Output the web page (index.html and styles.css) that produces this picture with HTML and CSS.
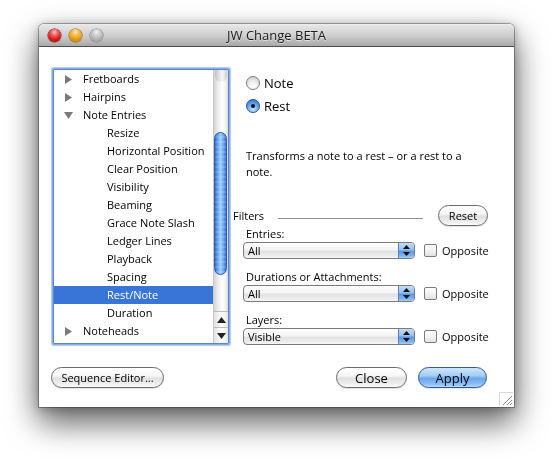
FILE: index.html
```html
<!DOCTYPE html>
<html>
<head>
<meta charset="utf-8">
<link rel="stylesheet" href="styles.css">
</head>
<body>
<div class="window">
  <div class="titlebar">
    <div class="lights">
      <span class="light red"></span>
      <span class="light orange"></span>
      <span class="light gray"></span>
    </div>
    <div class="title">JW Change BETA</div>
  </div>
  <div class="content">
    <div class="main">
      <div class="listbox">
        <div class="rows">
          <div class="row top"><svg class="tri" width="9" height="9" viewBox="0 0 9 9"><path d="M1 0 L8 4.5 L1 9 Z" fill="#7a7a7a"/></svg><span>Fretboards</span></div>
          <div class="row top"><svg class="tri" width="9" height="9" viewBox="0 0 9 9"><path d="M1 0 L8 4.5 L1 9 Z" fill="#7a7a7a"/></svg><span>Hairpins</span></div>
          <div class="row top"><svg class="tri" width="9" height="9" viewBox="0 0 9 9"><path d="M0 1 L9 1 L4.5 8 Z" fill="#7a7a7a"/></svg><span>Note Entries</span></div>
          <div class="row child">Resize</div>
          <div class="row child">Horizontal Position</div>
          <div class="row child">Clear Position</div>
          <div class="row child">Visibility</div>
          <div class="row child">Beaming</div>
          <div class="row child">Grace Note Slash</div>
          <div class="row child">Ledger Lines</div>
          <div class="row child">Playback</div>
          <div class="row child">Spacing</div>
          <div class="row child selected">Rest/Note</div>
          <div class="row child">Duration</div>
          <div class="row top"><svg class="tri" width="9" height="9" viewBox="0 0 9 9"><path d="M1 0 L8 4.5 L1 9 Z" fill="#7a7a7a"/></svg><span>Noteheads</span></div>
        </div>
        <div class="scrollbar">
          <div class="track">
            <div class="cap"></div>
            <div class="knob"></div>
          </div>
          <div class="arrow up"><svg width="9" height="6" viewBox="0 0 9 6"><path d="M4.5 0 L9 6 L0 6 Z" fill="#222"/></svg></div>
          <div class="arrow down"><svg width="9" height="6" viewBox="0 0 9 6"><path d="M0 0 L9 0 L4.5 6 Z" fill="#222"/></svg></div>
        </div>
      </div>
      <div class="panel">
        <div class="radios">
          <label class="radio-row"><span class="radio"></span><span>Note</span></label>
          <label class="radio-row"><span class="radio on"><span class="dot"></span></span><span>Rest</span></label>
        </div>
        <p class="desc">Transforms a note to a rest – or a rest to a note.</p>
        <div class="filters">
          <span class="filters-label">Filters</span>
          <span class="rule"></span>
          <span class="btn reset">Reset</span>
        </div>
        <div class="group">
          <div class="glabel">Entries:</div>
          <div class="grow">
            <div class="popup"><span class="ptext">All</span><span class="parrows"><svg width="7" height="11" viewBox="0 0 7 11"><path d="M3.5 0 L7 4 L0 4 Z M0 7 L7 7 L3.5 11 Z" fill="#111"/></svg></span></div>
            <span class="check"></span><span class="opp">Opposite</span>
          </div>
        </div>
        <div class="group">
          <div class="glabel">Durations or Attachments:</div>
          <div class="grow">
            <div class="popup"><span class="ptext">All</span><span class="parrows"><svg width="7" height="11" viewBox="0 0 7 11"><path d="M3.5 0 L7 4 L0 4 Z M0 7 L7 7 L3.5 11 Z" fill="#111"/></svg></span></div>
            <span class="check"></span><span class="opp">Opposite</span>
          </div>
        </div>
        <div class="group">
          <div class="glabel">Layers:</div>
          <div class="grow">
            <div class="popup"><span class="ptext">Visible</span><span class="parrows"><svg width="7" height="11" viewBox="0 0 7 11"><path d="M3.5 0 L7 4 L0 4 Z M0 7 L7 7 L3.5 11 Z" fill="#111"/></svg></span></div>
            <span class="check"></span><span class="opp">Opposite</span>
          </div>
        </div>
      </div>
    </div>
    <div class="footer">
      <span class="btn seq">Sequence Editor...</span>
      <span class="spacer"></span>
      <span class="btn big close">Close</span>
      <span class="btn big apply">Apply</span>
    </div>
    <svg class="grip" width="14" height="14" viewBox="0 0 14 14">
      <path d="M0.5 14 L0.5 0.5 L14 0.5" fill="none" stroke="#d8d8d8"/>
      <path d="M4 13 L13 4 M8 13 L13 8 M11 13 L13 11" stroke="#8a8a8a" stroke-width="1"/>
      <path d="M5 13 L13 5 M9 13 L13 9" stroke="#ffffff" stroke-width="1"/>
    </svg>
  </div>
</div>
</body>
</html>
```

FILE: styles.css
```css
* { box-sizing: border-box; }
html, body { margin: 0; background: #ffffff; }
body {
  padding: 24px 0 0 39px;
  height: 462px;
  font-family: "Open Sans", "DejaVu Sans", sans-serif;
  color: #000;
}
.window {
  width: 475px;
  height: 383px;
  display: flex;
  flex-direction: column;
  background: #ffffff;
  border-radius: 5px 5px 0 0;
  box-shadow: 0 0 0 1px rgba(0,0,0,0.3);
  filter: drop-shadow(0 14px 16px rgba(0,0,0,0.55)) drop-shadow(0 2px 5px rgba(0,0,0,0.3));
}
.titlebar {
  height: 23px;
  flex: none;
  position: relative;
  display: flex;
  align-items: center;
  border-radius: 5px 5px 0 0;
  background: linear-gradient(#f2f2f2 0px, #e6e6e6 1px, #d0d0d0 50%, #b4b4b4 85%, #a8a8a8 100%);
  border-bottom: 1px solid #4e4e4e;
}
.lights {
  display: flex;
  gap: 8px;
  padding-left: 9px;
  padding-top: 1px;
}
.light {
  width: 13px;
  height: 13px;
  border-radius: 50%;
  display: block;
}
.red {
  background: radial-gradient(circle at 50% 25%, #ffd0d0 0, #f36a6a 25%, #d31b1b 60%, #a80d0d 100%);
  box-shadow: 0 0 0 0.5px #7a1010;
}
.orange {
  background: radial-gradient(circle at 50% 25%, #fff0c0 0, #f8c35a 25%, #e69a14 60%, #b57008 100%);
  box-shadow: 0 0 0 0.5px #8a5a08;
}
.gray {
  background: radial-gradient(circle at 50% 25%, #f2f2f2 0, #cfcfcf 30%, #adadad 65%, #939393 100%);
  box-shadow: 0 0 0 0.5px #7a7a7a;
}
.title {
  position: absolute;
  left: 0;
  right: 0;
  top: 0;
  height: 22px;
  line-height: 23px;
  text-align: center;
  font-size: 13px;
  color: #1a1a1a;
  text-shadow: 0 1px 0 rgba(255,255,255,0.5);
}
.content {
  flex: 1;
  position: relative;
  padding: 22px 27px 0 12px;
  display: flex;
  flex-direction: column;
}
.main {
  display: flex;
  height: 275px;
}
.listbox {
  flex: none;
  margin-left: 2px;
  width: 176px;
  height: 275px;
  border: 1px solid #5f86c4;
  box-shadow: 0 0 0 1px #86aee6, 0 0 1px 2px rgba(125,165,225,0.6);
  display: flex;
  overflow: hidden;
  border-radius: 1px;
}
.rows {
  flex: 1;
  font-size: 11px;
}
.row {
  height: 18px;
  line-height: 18px;
  display: flex;
  align-items: center;
  white-space: nowrap;
  color: #000;
}
.row.top { padding-left: 10px; }
.row.top .tri { margin-right: 10px; flex: none; }
.row.child { padding-left: 53px; }
.row.selected { background: #3875d7; color: #fff; }
.scrollbar {
  width: 15px;
  flex: none;
  display: flex;
  flex-direction: column;
  border-left: 1px solid #c9c9c9;
  background: linear-gradient(to right, #d4d4d4, #eeeeee 30%, #ffffff 60%, #f0f0f0 85%, #d8d8d8);
}
.track {
  flex: 1;
  position: relative;
  display: flex;
  flex-direction: column;
}
.cap {
  height: 12px;
  margin: 0 1px;
  border-radius: 0 0 7px 7px;
  background: linear-gradient(to right, #b8b8b8, #dcdcdc 35%, #f4f4f4 60%, #c4c4c4);
  opacity: 0.7;
}
.knob {
  margin-top: 50px;
  height: 143px;
  width: 13px;
  border-radius: 7px;
  border: 1px solid #2f5cb4;
  background:
    repeating-linear-gradient(#ffffff00 0, #ffffff00 3px, rgba(255,255,255,0.14) 3px, rgba(255,255,255,0.14) 5px),
    linear-gradient(to right, #3567c8, #5b9aec 20%, #9fcdfa 50%, #68a6ee 78%, #3a6acb);
}
.arrow {
  height: 16px;
  display: flex;
  align-items: center;
  justify-content: center;
  border-top: 1px solid #bdbdbd;
  background: linear-gradient(to right, #e0e0e0, #f8f8f8 40%, #ffffff 60%, #e4e4e4);
}
.panel {
  margin-left: 4px;
  flex: 1;
  min-width: 0;
  font-size: 11px;
}
.radios {
  padding-top: 2px;
}
.radio-row {
  height: 23px;
  display: flex;
  align-items: center;
  padding-left: 13px;
  font-size: 13px;
}
.radio {
  width: 14px;
  height: 14px;
  border-radius: 50%;
  border: 1px solid #7d7d7d;
  background: radial-gradient(circle at 50% 75%, #ffffff 0, #f2f2f2 35%, #d4d4d4 80%, #c0c0c0 100%);
  margin-right: 4px;
  display: flex;
  align-items: center;
  justify-content: center;
}
.radio.on {
  border-color: #2b4f8f;
  background: radial-gradient(circle at 50% 80%, #c6e4ff 0, #7ab4f2 40%, #3f7fd6 80%, #2d64b8 100%);
}
.dot {
  width: 4px;
  height: 4px;
  border-radius: 50%;
  background: #111;
}
.desc {
  margin: 31px 0 0 13px;
  line-height: 16px;
  width: 240px;
}
.filters {
  margin-top: 25px;
  height: 21px;
  display: flex;
  align-items: center;
}
.filters-label { width: 45px; flex: none; }
.rule {
  flex: none;
  width: 145px;
  height: 1px;
  background: #8e8e8e;
  margin-top: 5px;
}
.btn {
  display: flex;
  align-items: center;
  justify-content: center;
  height: 21px;
  border-radius: 11px;
  border: 1px solid #6c6c6c;
  background: linear-gradient(#ffffff 0, #f6f6f6 40%, #e0e0e0 55%, #ececec 80%, #fbfbfb 100%);
  box-shadow: 0 1px 1px rgba(0,0,0,0.12);
  white-space: nowrap;
  flex: none;
}
.reset {
  margin-left: 15px;
  width: 50px;
  font-size: 11px;
}
.group { margin-top: 1px; }
.group + .group { margin-top: 11px; }
.glabel {
  height: 14px;
  line-height: 14px;
  padding-left: 13px;
  margin-bottom: 1px;
  white-space: nowrap;
}
.grow {
  display: flex;
  align-items: center;
  height: 17px;
  padding-left: 10px;
  white-space: nowrap;
}
.popup {
  flex: none;
  width: 172px;
  height: 17px;
  border: 1px solid #7a7a7a;
  border-radius: 4px;
  display: flex;
  overflow: hidden;
  background: linear-gradient(#ffffff 0, #f4f4f4 45%, #e2e2e2 55%, #ececec 85%, #f8f8f8 100%);
}
.ptext {
  flex: 1;
  padding-left: 4px;
  line-height: 15px;
}
.parrows {
  width: 16px;
  display: flex;
  align-items: center;
  justify-content: center;
  border-left: 1px solid #5a7fc0;
  background: linear-gradient(#c4ddf8 0, #92c0f2 45%, #5c98e4 55%, #7fb4f0 85%, #a8d0f8 100%);
}
.check {
  flex: none;
  width: 13px;
  height: 13px;
  margin-left: 9px;
  border: 1px solid #7a7a7a;
  border-radius: 2px;
  background: linear-gradient(#ffffff, #f2f2f2 50%, #e2e2e2);
}
.opp {
  flex: none;
  margin-left: 5px;
}
.footer {
  margin-top: 23px;
  display: flex;
  gap: 11px;
}
.seq {
  width: 113px;
  font-size: 11px;
}
.spacer { flex: 1; }
.big { font-size: 13px; }
.close { width: 71px; }
.apply {
  width: 69px;
  border-color: #34589a;
  background: linear-gradient(#cfe6fb 0, #a4cdf6 40%, #6aa6ec 55%, #8cc0f4 85%, #b6dbfb 100%);
}
.grip {
  position: absolute;
  right: 1px;
  bottom: 1px;
}
```
